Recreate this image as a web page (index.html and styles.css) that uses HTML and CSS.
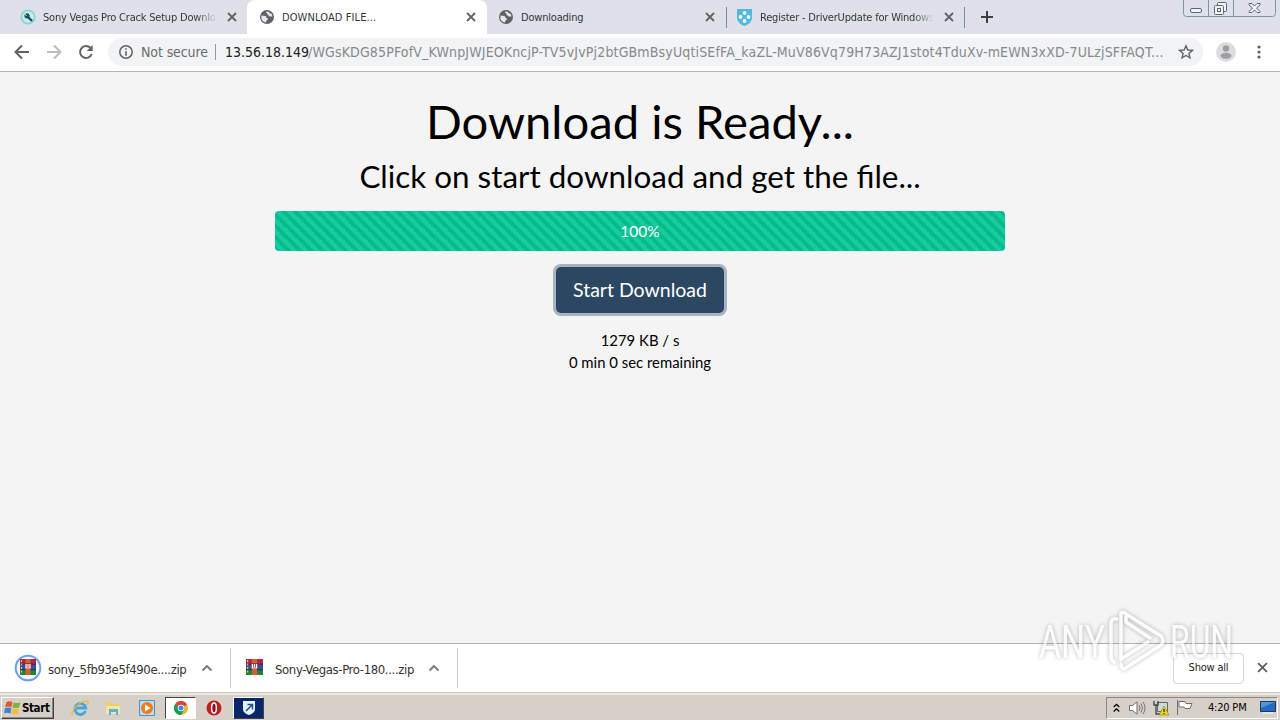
FILE: index.html
```html
<!DOCTYPE html>
<html lang="en">
<head>
<meta charset="utf-8">
<title>DOWNLOAD FILE...</title>
<link rel="stylesheet" href="styles.css">
</head>
<body>
<svg width="0" height="0" class="defs">
  <symbol id="globe" viewBox="0 0 14 14"><circle cx="7" cy="7" r="7" fill="#5f6368"/><path d="M1.400 5.600 L5.200 6.100 Q6.800 6.400 6.300 7.800 Q8 8 8 9.400 Q6 10 6 12.600 Q2.300 11.800 1.400 8.500Z M6.500 1.500 Q5.500 3 7.200 3.300 Q7.200 5 8.700 5.400 L9.600 6.600 L12.500 6.400 Q12.300 4.500 11 3.200 L9.500 3.500 L9.300 1.900Z" fill="#e4e7ec"/></symbol>
  <symbol id="x" viewBox="0 0 10 10"><path d="M1 1 L9 9 M9 1 L1 9" stroke="#5f6368" stroke-width="1.8" fill="none"/></symbol>
  <symbol id="rar" viewBox="0 0 16 16"><path fill="#b3204a" d="M0 0h16v5H0z"/><path fill="#344fa5" d="M0 5h16v6H0z"/><path fill="#21823a" d="M0 11h16v5H0z"/><path d="M0 5.200h16M0 10.800h16" stroke="#222" stroke-width=".7"/><path fill="#c8642c" d="M5.500 0h5v16h-5z"/><path d="M1.500 1v14" stroke="#ddc857" stroke-width="1.200" stroke-dasharray="2 1.500"/><path fill="#a72b35" d="M5 4h6v6H5z"/><path d="M6 5v4h4V5M8 5v3" stroke="#fff" stroke-width="1.200" fill="none"/></symbol>
  <symbol id="up" viewBox="0 0 12 8"><path d="M1.500 6.500 L6 2 L10.500 6.500" fill="none" stroke="#777" stroke-width="1.800"/></symbol>
</svg>
<div class="tabs">
  <div class="tab first">
    <svg class="fav" width="16" height="16" viewBox="0 0 16 16"><circle cx="8" cy="8" r="7.600" fill="#8fd2d5"/><circle cx="8" cy="8" r="5.800" fill="#c9edec"/><circle cx="7" cy="6.800" r="2.600" fill="#15505d"/><path d="M8 8l4 4" stroke="#15505d" stroke-width="2.400"/><path d="M4.500 5l2.300 1.600" stroke="#c9edec"/></svg>
    <span class="title fade">Sony Vegas Pro Crack Setup Downlo</span><svg class="close" width="10" height="10"><use href="#x"/></svg>
  </div>
  <div class="tab active">
    <svg class="fav" width="14" height="14"><use href="#globe"/></svg>
    <span class="title caps">DOWNLOAD FILE...</span><svg class="close" width="10" height="10"><use href="#x"/></svg>
  </div>
  <div class="tab third">
    <svg class="fav" width="14" height="14"><use href="#globe"/></svg>
    <span class="title">Downloading</span><svg class="close" width="10" height="10"><use href="#x"/></svg>
  </div>
  <div class="tab fourth">
    <svg class="fav" width="15" height="17" viewBox="0 0 15 17"><path d="M0 0h15v9q0 5-7.500 8Q0 14 0 9Z" fill="#52b9d9"/><g fill="#e6faff"><circle cx="7.500" cy="4" r="1.900"/><circle cx="3.500" cy="8" r="1.900"/><circle cx="11.500" cy="8" r="1.900"/><circle cx="7.500" cy="12" r="1.900"/></g></svg>
    <span class="title fade">Register - DriverUpdate for Windows</span><svg class="close" width="10" height="10"><use href="#x"/></svg>
  </div>
  <svg class="plus" width="12" height="12" viewBox="0 0 12 12"><path d="M6 0v12M0 6h12" stroke="#3c4043" stroke-width="2"/></svg>
  <svg class="winbtns" width="93" height="17" viewBox="0 0 93 17"><path d="M.5 0v13.500q0 3 3 3h86q3 0 3-3V0M25.500 0v16M50.500 0v16" fill="none" stroke="#8a919c"/><g fill="#f1f3f7" stroke="#5d6673"><rect x="7.500" y="8.500" width="11" height="4" rx="1.500"/><rect x="34.500" y="2.500" width="9" height="9" rx="1"/><rect x="31.500" y="5.500" width="9" height="9" rx="1"/><rect x="34.500" y="8.500" width="3" height="3"/><path d="M66 3.500h3l2.500 2.500 2.500-2.500h3v1.500L73.500 8l3.500 3.500v1h-3l-2.500-2.500-2.500 2.500h-3v-1L69.500 8 66 5Z"/></g></svg>
</div>
<div class="toolbar">
  <svg class="back" width="16" height="16" viewBox="0 0 16 16"><path d="M15 8H2M8 1.500L1.500 8 8 14.500" fill="none" stroke="#5f6368" stroke-width="2"/></svg>
  <svg class="fwd" width="16" height="16" viewBox="0 0 16 16"><path d="M1 8h13M8 1.500L14.500 8 8 14.500" fill="none" stroke="#babcbe" stroke-width="2"/></svg>
  <svg class="reload" width="16" height="16" viewBox="0 0 16 16"><path d="M13.700 10A6 6 0 1 1 12.400 3.800" fill="none" stroke="#5f6368" stroke-width="2"/><path d="M14.700 1v6h-6z" fill="#5f6368"/></svg>
  <div class="omnibox">
    <svg class="info" width="14" height="14" viewBox="0 0 14 14"><circle cx="7" cy="7" r="6.200" fill="none" stroke="#5f6368" stroke-width="1.500"/><path d="M7 3.300v1.500M7 6.200v4.500" stroke="#5f6368" stroke-width="1.600"/></svg>
    <span class="ns">Not secure</span><i class="sep"></i><span class="host">13.56.18.149</span><span class="path">/WGsKDG85PFofV_KWnpJWJEOKncjP-TV5vJvPj2btGBmBsyUqtiSEfFA_kaZL-MuV86Vq79H73AZJ1stot4TduXv-mEWN3xXD-7ULzjSFFAQT...</span>
    <svg class="star" width="16" height="16" viewBox="0 0 16 16"><path d="M8 1.800l1.800 4.200 4.600.4-3.500 3 1.100 4.500L8 11.500l-4 2.400 1.100-4.500-3.500-3 4.600-.4z" fill="none" stroke="#5f6368" stroke-width="1.400"/></svg>
  </div>
  <svg class="avatar" width="20" height="20" viewBox="0 0 20 20"><circle cx="10" cy="10" r="10" fill="#dcdddf"/><circle cx="10" cy="6.500" r="3.200" fill="#9d9fa2"/><ellipse cx="10" cy="13.800" rx="5.500" ry="3" fill="#9d9fa2"/></svg>
  <svg class="dots" width="4" height="14" viewBox="0 0 4 14"><g fill="#5f6368"><circle cx="2" cy="2" r="1.600"/><circle cx="2" cy="7" r="1.600"/><circle cx="2" cy="12" r="1.600"/></g></svg>
</div>
<main class="page">
  <h1>Download is Ready...</h1>
  <h2>Click on start download and get the file...</h2>
  <div class="progress">100%</div>
  <button class="start-dl">Start Download</button>
  <p class="stats">1279 KB / s<br>0 min 0 sec remaining</p>
</main>
<div class="shelf">
  <div class="dl one"><svg width="28" height="28" viewBox="0 0 28 28"><circle cx="14" cy="14" r="12.300" fill="#f5f8fd" stroke="#6d9fe8" stroke-width="2"/><use href="#rar" x="6" y="5" width="16" height="16"/></svg><span class="fn f1">sony_5fb93e5f490e....zip</span><svg class="chev" width="12" height="8"><use href="#up"/></svg></div>
  <div class="dl two"><svg class="lift" width="17" height="16" viewBox="0 0 16 16" preserveAspectRatio="none"><use href="#rar"/></svg><span class="fn f2">Sony-Vegas-Pro-180....zip</span><svg class="chev" width="12" height="8"><use href="#up"/></svg></div>
  <div class="showall">Show all</div>
  <svg class="shelfx" width="11" height="11"><use href="#x"/></svg>
</div>
<div class="taskbar">
  <div class="startbtn"><svg width="17" height="16" viewBox="0 0 16 16" preserveAspectRatio="none"><path d="M2.500 2Q5 .5 8 2L7 7Q4 5.800 1 7Z" fill="#e2572b"/><path d="M9 2.500q3 1.200 6.500 0L14 7.500q-3 1.200-6 0Z" fill="#78b33e"/><path d="M1 8q3-1.200 6 0l-1 5.500q-3-1.500-6-.300Z" fill="#3f83cf"/><path d="M8 8.500q3 1.200 6 0L13 14q-3 1-6 0Z" fill="#f3bd37"/></svg><b>Start</b></div>
  <svg class="ie" width="18" height="18" viewBox="0 0 18 18"><path d="M14.500 12A5.500 5.500 0 1 1 14.800 9H5" fill="none" stroke="#45a5df" stroke-width="2.800"/><path d="M1.500 16C-1 12 10 1 16 2c2 .5 1 3 0 4" fill="none" stroke="#e5bd3d" stroke-width="1.300"/></svg>
  <svg class="folder" width="16" height="16" viewBox="0 0 16 16"><path d="M1 2h5l1 2h7v9H1z" fill="#ecd06d"/><path d="M1 6h14v8H1z" fill="#f5e49d"/><path d="M4 15V9h9v6h-2v-3H6v3z" fill="#5ab0df"/></svg>
  <svg class="wmp" width="16" height="16" viewBox="0 0 16 16"><path d="M.5.500h15v15H.5z" fill="#b9dcf3" stroke="#4b93c8"/><circle cx="8" cy="8" r="6" fill="#f07c16"/><path d="M6 4.500v7l5.500-3.500z" fill="#fff"/></svg>
  <div class="chromebtn"><svg width="14" height="14" viewBox="0 0 14 14"><circle cx="7" cy="7" r="7" fill="#e2b733"/><path d="M7 7L.9 3.500A7 7 0 0 1 13.100 3.500Z" fill="#db4437"/><path d="M7 7L.9 3.500A7 7 0 0 0 7 14l3-5Z" fill="#169b58"/><circle cx="7" cy="7" r="3.300" fill="#fff"/><circle cx="7" cy="7" r="2.500" fill="#4285f4"/></svg></div>
  <svg class="opera" width="16" height="16" viewBox="0 0 16 16"><circle cx="8" cy="8" r="7.500" fill="#c31b20"/><ellipse cx="8" cy="8" rx="2.400" ry="5" fill="#8c1114" stroke="#fff" stroke-width="1.500"/></svg>
  <div class="shieldbtn"><svg width="14" height="16" viewBox="0 0 14 16"><path d="M1 1h12v8q0 4-6 6-6-2-6-6Z" fill="#e3f2fc"/><path d="M4 11l6-6M5.500 4.500h5v5" fill="none" stroke="#1e4c93" stroke-width="1.500"/></svg></div>
  <div class="tray">
    <svg class="cc" width="7" height="10" viewBox="0 0 7 10"><path d="M.7 4L3.500 1.300 6.300 4M.7 8.500l2.800-2.700 2.800 2.700" fill="none" stroke="#000" stroke-width="1.300"/></svg>
    <svg class="spk" width="17" height="14" viewBox="0 0 17 14"><path d="M.5 4.500h3L8 .8v12.400L3.500 9.500h-3z" fill="#fff" stroke="#6d6d6d"/><path d="M10 4q2 3 0 6M12 2.500q3 4.500 0 9M14 1q4 6 0 12" fill="none" stroke="#777"/></svg>
    <svg class="net" width="16" height="16" viewBox="0 0 16 16"><path d="M4.500 2.500h10v9h-10z" fill="#ccd8dd" stroke="#666"/><path d="M1 1v4h4V1M3 5v9h5" fill="none" stroke="#444" stroke-width="1.300"/><path d="M11 6l5 9H6z" fill="#f1d91b" stroke="#8c7800" stroke-width=".6"/><path d="M11 9v3M11 13v1" stroke="#222" stroke-width="1.200"/></svg>
    <svg class="flag" width="17" height="15" viewBox="0 0 17 15"><path d="M1.500 0v15M3 1.500h6l1 2h6l-2 5H9l-1-1.500H3z" fill="#fff" stroke="#6e6e6e"/></svg>
    <span class="clock">4:20 PM</span>
    <svg class="desk" width="16" height="13" viewBox="0 0 16 13"><path d="M.5.500h15v10H.5z" fill="#2769bd" stroke="#1a3869"/><path d="M1 1h14L1 7z" fill="#4f96e2"/><path d="M3 12h10" stroke="#eee" stroke-width="1.500"/></svg>
  </div>
</div>
<svg class="mark" width="210" height="76" viewBox="0 0 210 76"><g class="word"><text x="9" y="56" textLength="66" lengthAdjust="spacingAndGlyphs">ANY</text><text x="140" y="56" textLength="63" lengthAdjust="spacingAndGlyphs">RUN</text></g><g class="play"><path d="M87 17q-6-1-6 4v34q0 3 3 5"/><path d="M120 36L96 20V12l35 22M91 12v46M91 11q3-2 6 2M91 57l27-17M94 67l37-24q4-4 0-9M91 62q0 4 3 5"/></g></svg>
</body>
</html>
```
FILE: styles.css
```css
*{box-sizing:border-box}
body{margin:0;width:1280px;height:720px;overflow:hidden;display:flex;flex-direction:column;background:#f4f4f4;font-family:"DejaVu Sans Condensed","DejaVu Sans",sans-serif;font-stretch:condensed;color:#222}
svg{display:block;flex:none}
.defs{position:absolute}
.tabs{height:34px;flex:none;display:flex;background:#dee1e9}
.tab{display:flex;align-items:center;width:239px;height:34px;flex:none;font-size:11px;color:#33373b;white-space:nowrap}
.first{width:247px;padding:0 10px 0 20px;border-radius:0 0 8px 0}
.active{width:240px;padding:0 11px 0 13px;background:#fff;border-radius:8px 8px 0 0}
.third{padding:0 11px 0 12px}
.fourth{padding:0 10px 0 10px;border-left:1px solid #858991;border-right:1px solid #858991;border-image:linear-gradient(transparent 8px,#858991 8px,#858991 27px,transparent 27px) 1}
.title{flex:1;overflow:hidden;margin-left:8px;margin-right:10px;letter-spacing:-.2px}
.first .title{margin-left:7px}
.caps{letter-spacing:.1px}
.fade{-webkit-mask-image:linear-gradient(90deg,#000 88%,transparent);mask-image:linear-gradient(90deg,#000 88%,transparent)}
.plus{margin:11px 0 0 16px}
.winbtns{margin:0 4px 0 auto}
.toolbar{height:38px;flex:none;display:flex;align-items:center;background:#fff;border-bottom:1px solid #b3b5b3;padding:0 19px 1px 14px}
.fwd{margin-left:16px}
.reload{margin-left:16px}
.omnibox{margin-left:14px;width:1095px;height:28px;border-radius:14px;background:#f1f3f4;display:flex;align-items:center;font-size:14px;white-space:nowrap;padding:0 9px 0 11px;color:#686c70}
.ns{margin-left:8px;letter-spacing:-.1px;width:68px}
.sep{width:1px;height:16px;background:#999;margin:0 9px 0 6px}
.host{color:#222;width:83px}
.path{color:#85898d;width:856px;letter-spacing:.155px}
.star{margin-left:auto}
.avatar{margin-left:13px}
.dots{margin-left:auto}
.page{flex:1;display:flex;flex-direction:column;align-items:center;font-family:Lato,sans-serif;font-stretch:normal;color:#000}
h1{margin:20px 0 0;font-size:47.200px;line-height:58px;font-weight:400}
h2{margin:6px 0 0;font-size:31.400px;line-height:40px;font-weight:400}
.progress{margin-top:15px;width:730px;height:40px;border-radius:4px;background:linear-gradient(45deg,#1acb9e 25%,#03bc8c 25%,#03bc8c 50%,#1acb9e 50%,#1acb9e 75%,#03bc8c 75%) 0 0/11.400px 11.400px;color:#fff;font-size:15.500px;line-height:40px;text-align:center}
.start-dl{margin-top:16px;width:168px;height:46px;padding:0 0 2px;border:0;border-radius:5px;background:#2c4762;box-shadow:0 0 0 3px #a5b3c3;color:#fff;font:400 19.500px Lato,sans-serif}
.stats{margin:16px 0 0;font-size:14.900px;line-height:22px;text-align:center}
.shelf{height:50px;flex:none;background:#fff;border-top:1px solid #b1b1b1;border-bottom:1px solid #d4c6bc;display:flex;align-items:center;font-size:13px;color:#333}
.dl{display:flex;align-items:center;height:40px;border-right:1px solid #ccc;white-space:nowrap}
.one{width:231px;padding-left:14px}
.two{width:227px;padding-left:15px}
.lift{margin-top:-2px}
.fn{width:139px;margin-top:3px;letter-spacing:-.37px}
.f1{margin-left:6px}
.f2{margin-left:12px}
.chev{margin-left:14px}
.showall{margin-left:auto;width:71px;height:31px;border:1px solid #d6d6d6;border-radius:4px;font-size:11px;letter-spacing:-.2px;line-height:27px;text-align:center;color:#222}
.shelfx{margin:-2px 12px 0 13px}
.taskbar{height:27px;flex:none;background:#d6d0c8;border-top:2px solid #ece9e3;display:flex;align-items:center;padding-right:2px}
.startbtn{width:53px;height:22px;margin-left:1px;display:flex;align-items:center;gap:1px;padding-left:2px;background:#d6d0c8;border:1px solid;border-color:#fff #444 #444 #fff;box-shadow:inset -1px -1px #888;font-size:11.500px;letter-spacing:-.4px;color:#000}
.ie{margin-left:17px}
.folder{margin-left:16px}
.wmp{margin-left:18px}
.chromebtn{margin-left:10px;width:31px;height:22px;background:#fff;border:1px solid;border-color:#444 #fff #fff #444;display:flex;align-items:center;justify-content:center}
.opera{margin-left:10px}
.shieldbtn{margin-left:11px;width:31px;height:22px;background:#0b2668;border:1px solid;border-color:#fff #444 #444 #fff;display:flex;align-items:center;justify-content:center}
.tray{margin-left:auto;width:172px;height:22px;border:1px solid;border-color:#888 #fff #fff #888;display:flex;align-items:center;padding:0 1px 0 6px;font-size:11px;color:#000}
.spk{margin-left:9px}
.net{margin-left:7px}
.flag{margin-left:7px}
.clock{margin-left:15px;width:40px;white-space:nowrap;letter-spacing:-.2px}
.desk{margin-left:auto}
.mark{position:absolute;left:1030px;top:602px;filter:drop-shadow(0 0 2px rgba(0,0,0,.4));opacity:.7}
.word{font:400 47px Roboto,sans-serif;fill:#fff}
.play{fill:none;stroke:#fff;stroke-width:3.500;stroke-linejoin:round;stroke-linecap:round}
```
